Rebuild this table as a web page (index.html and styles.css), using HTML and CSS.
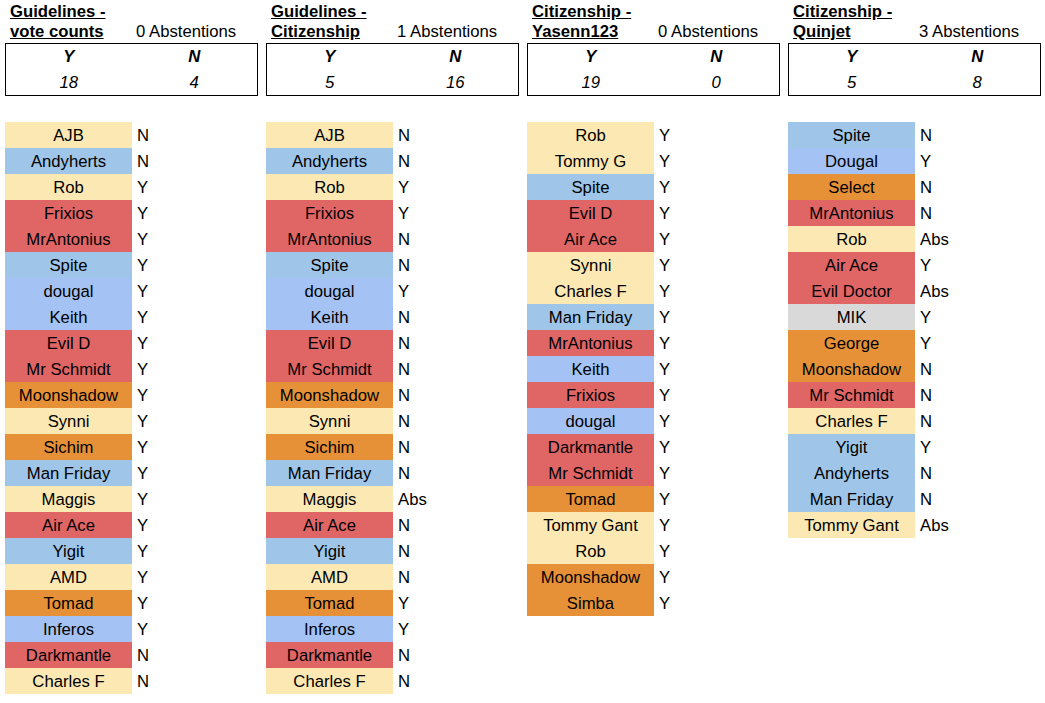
FILE: index.html
```html
<!DOCTYPE html>
<html>
<head>
<meta charset="utf-8">
<link rel="stylesheet" href="styles.css">
</head>
<body>
<div class="sheet">

  <div class="block">
    <div class="head">
      <div class="title">Guidelines -<br>vote counts</div>
      <div class="abst">0 Abstentions</div>
    </div>
    <div class="box">
      <div class="brow labels"><span>Y</span><span>N</span></div>
      <div class="brow nums"><span>18</span><span>4</span></div>
    </div>
    <div class="list">
      <div class="row"><div class="name cream">AJB</div><div class="vote">N</div></div>
      <div class="row"><div class="name blue">Andyherts</div><div class="vote">N</div></div>
      <div class="row"><div class="name cream">Rob</div><div class="vote">Y</div></div>
      <div class="row"><div class="name red">Frixios</div><div class="vote">Y</div></div>
      <div class="row"><div class="name red">MrAntonius</div><div class="vote">Y</div></div>
      <div class="row"><div class="name blue">Spite</div><div class="vote">Y</div></div>
      <div class="row"><div class="name corn">dougal</div><div class="vote">Y</div></div>
      <div class="row"><div class="name corn">Keith</div><div class="vote">Y</div></div>
      <div class="row"><div class="name red">Evil D</div><div class="vote">Y</div></div>
      <div class="row"><div class="name red">Mr Schmidt</div><div class="vote">Y</div></div>
      <div class="row"><div class="name orange">Moonshadow</div><div class="vote">Y</div></div>
      <div class="row"><div class="name cream">Synni</div><div class="vote">Y</div></div>
      <div class="row"><div class="name orange">Sichim</div><div class="vote">Y</div></div>
      <div class="row"><div class="name blue">Man Friday</div><div class="vote">Y</div></div>
      <div class="row"><div class="name cream">Maggis</div><div class="vote">Y</div></div>
      <div class="row"><div class="name red">Air Ace</div><div class="vote">Y</div></div>
      <div class="row"><div class="name blue">Yigit</div><div class="vote">Y</div></div>
      <div class="row"><div class="name cream">AMD</div><div class="vote">Y</div></div>
      <div class="row"><div class="name orange">Tomad</div><div class="vote">Y</div></div>
      <div class="row"><div class="name corn">Inferos</div><div class="vote">Y</div></div>
      <div class="row"><div class="name red">Darkmantle</div><div class="vote">N</div></div>
      <div class="row"><div class="name cream">Charles F</div><div class="vote">N</div></div>
    </div>
  </div>

  <div class="block">
    <div class="head">
      <div class="title">Guidelines -<br>Citizenship</div>
      <div class="abst">1 Abstentions</div>
    </div>
    <div class="box">
      <div class="brow labels"><span>Y</span><span>N</span></div>
      <div class="brow nums"><span>5</span><span>16</span></div>
    </div>
    <div class="list">
      <div class="row"><div class="name cream">AJB</div><div class="vote">N</div></div>
      <div class="row"><div class="name blue">Andyherts</div><div class="vote">N</div></div>
      <div class="row"><div class="name cream">Rob</div><div class="vote">Y</div></div>
      <div class="row"><div class="name red">Frixios</div><div class="vote">Y</div></div>
      <div class="row"><div class="name red">MrAntonius</div><div class="vote">N</div></div>
      <div class="row"><div class="name blue">Spite</div><div class="vote">N</div></div>
      <div class="row"><div class="name corn">dougal</div><div class="vote">Y</div></div>
      <div class="row"><div class="name corn">Keith</div><div class="vote">N</div></div>
      <div class="row"><div class="name red">Evil D</div><div class="vote">N</div></div>
      <div class="row"><div class="name red">Mr Schmidt</div><div class="vote">N</div></div>
      <div class="row"><div class="name orange">Moonshadow</div><div class="vote">N</div></div>
      <div class="row"><div class="name cream">Synni</div><div class="vote">N</div></div>
      <div class="row"><div class="name orange">Sichim</div><div class="vote">N</div></div>
      <div class="row"><div class="name blue">Man Friday</div><div class="vote">N</div></div>
      <div class="row"><div class="name cream">Maggis</div><div class="vote">Abs</div></div>
      <div class="row"><div class="name red">Air Ace</div><div class="vote">N</div></div>
      <div class="row"><div class="name blue">Yigit</div><div class="vote">N</div></div>
      <div class="row"><div class="name cream">AMD</div><div class="vote">N</div></div>
      <div class="row"><div class="name orange">Tomad</div><div class="vote">Y</div></div>
      <div class="row"><div class="name corn">Inferos</div><div class="vote">Y</div></div>
      <div class="row"><div class="name red">Darkmantle</div><div class="vote">N</div></div>
      <div class="row"><div class="name cream">Charles F</div><div class="vote">N</div></div>
    </div>
  </div>

  <div class="block">
    <div class="head">
      <div class="title">Citizenship -<br>Yasenn123</div>
      <div class="abst">0 Abstentions</div>
    </div>
    <div class="box">
      <div class="brow labels"><span>Y</span><span>N</span></div>
      <div class="brow nums"><span>19</span><span>0</span></div>
    </div>
    <div class="list">
      <div class="row"><div class="name cream">Rob</div><div class="vote">Y</div></div>
      <div class="row"><div class="name cream">Tommy G</div><div class="vote">Y</div></div>
      <div class="row"><div class="name blue">Spite</div><div class="vote">Y</div></div>
      <div class="row"><div class="name red">Evil D</div><div class="vote">Y</div></div>
      <div class="row"><div class="name red">Air Ace</div><div class="vote">Y</div></div>
      <div class="row"><div class="name cream">Synni</div><div class="vote">Y</div></div>
      <div class="row"><div class="name cream">Charles F</div><div class="vote">Y</div></div>
      <div class="row"><div class="name blue">Man Friday</div><div class="vote">Y</div></div>
      <div class="row"><div class="name red">MrAntonius</div><div class="vote">Y</div></div>
      <div class="row"><div class="name corn">Keith</div><div class="vote">Y</div></div>
      <div class="row"><div class="name red">Frixios</div><div class="vote">Y</div></div>
      <div class="row"><div class="name corn">dougal</div><div class="vote">Y</div></div>
      <div class="row"><div class="name red">Darkmantle</div><div class="vote">Y</div></div>
      <div class="row"><div class="name red">Mr Schmidt</div><div class="vote">Y</div></div>
      <div class="row"><div class="name orange">Tomad</div><div class="vote">Y</div></div>
      <div class="row"><div class="name cream">Tommy Gant</div><div class="vote">Y</div></div>
      <div class="row"><div class="name cream">Rob</div><div class="vote">Y</div></div>
      <div class="row"><div class="name orange">Moonshadow</div><div class="vote">Y</div></div>
      <div class="row"><div class="name orange">Simba</div><div class="vote">Y</div></div>
    </div>
  </div>

  <div class="block">
    <div class="head">
      <div class="title">Citizenship -<br>Quinjet</div>
      <div class="abst">3 Abstentions</div>
    </div>
    <div class="box">
      <div class="brow labels"><span>Y</span><span>N</span></div>
      <div class="brow nums"><span>5</span><span>8</span></div>
    </div>
    <div class="list">
      <div class="row"><div class="name blue">Spite</div><div class="vote">N</div></div>
      <div class="row"><div class="name corn">Dougal</div><div class="vote">Y</div></div>
      <div class="row"><div class="name orange">Select</div><div class="vote">N</div></div>
      <div class="row"><div class="name red">MrAntonius</div><div class="vote">N</div></div>
      <div class="row"><div class="name cream">Rob</div><div class="vote">Abs</div></div>
      <div class="row"><div class="name red">Air Ace</div><div class="vote">Y</div></div>
      <div class="row"><div class="name red">Evil Doctor</div><div class="vote">Abs</div></div>
      <div class="row"><div class="name gray">MIK</div><div class="vote">Y</div></div>
      <div class="row"><div class="name orange">George</div><div class="vote">Y</div></div>
      <div class="row"><div class="name orange">Moonshadow</div><div class="vote">N</div></div>
      <div class="row"><div class="name red">Mr Schmidt</div><div class="vote">N</div></div>
      <div class="row"><div class="name cream">Charles F</div><div class="vote">N</div></div>
      <div class="row"><div class="name blue">Yigit</div><div class="vote">Y</div></div>
      <div class="row"><div class="name blue">Andyherts</div><div class="vote">N</div></div>
      <div class="row"><div class="name blue">Man Friday</div><div class="vote">N</div></div>
      <div class="row"><div class="name cream">Tommy Gant</div><div class="vote">Abs</div></div>
    </div>
  </div>

</div>
</body>
</html>
```

FILE: styles.css
```css
html, body {
  margin: 0;
  padding: 0;
  background: #ffffff;
}

body {
  font-family: "Liberation Sans", Arial, sans-serif;
  font-size: 16.7px;
  color: #000000;
}

.sheet {
  display: flex;
  padding-left: 5px;
}

.block {
  width: 261px;
  flex: 0 0 261px;
  display: flex;
  flex-direction: column;
}

.head {
  display: flex;
  align-items: flex-end;
  height: 42px;
  padding-top: 1px;
  box-sizing: border-box;
}

.title {
  width: 127px;
  padding-left: 5px;
  box-sizing: border-box;
  font-weight: bold;
  text-decoration: underline;
  line-height: 20px;
}

.abst {
  padding-left: 4px;
  line-height: 20px;
}

.box {
  width: 253px;
  border: 1px solid #000000;
  margin-top: 1px;
  box-sizing: border-box;
  height: 53px;
  display: flex;
  flex-direction: column;
}

.brow {
  display: flex;
  height: 25.5px;
  line-height: 26px;
  font-style: italic;
}

.brow span {
  flex: 1;
  text-align: center;
}

.labels {
  font-weight: bold;
}

.list {
  margin-top: 26px;
  display: flex;
  flex-direction: column;
}

.row {
  display: flex;
  height: 26px;
  line-height: 28px;
}

.name {
  width: 127px;
  text-align: center;
}

.vote {
  padding-left: 5px;
}

.cream { background: #fce8b2; }
.blue { background: #9fc5e8; }
.corn { background: #a4c2f4; }
.red { background: #e06666; }
.orange { background: #e69138; }
.gray { background: #d9d9d9; }
```
